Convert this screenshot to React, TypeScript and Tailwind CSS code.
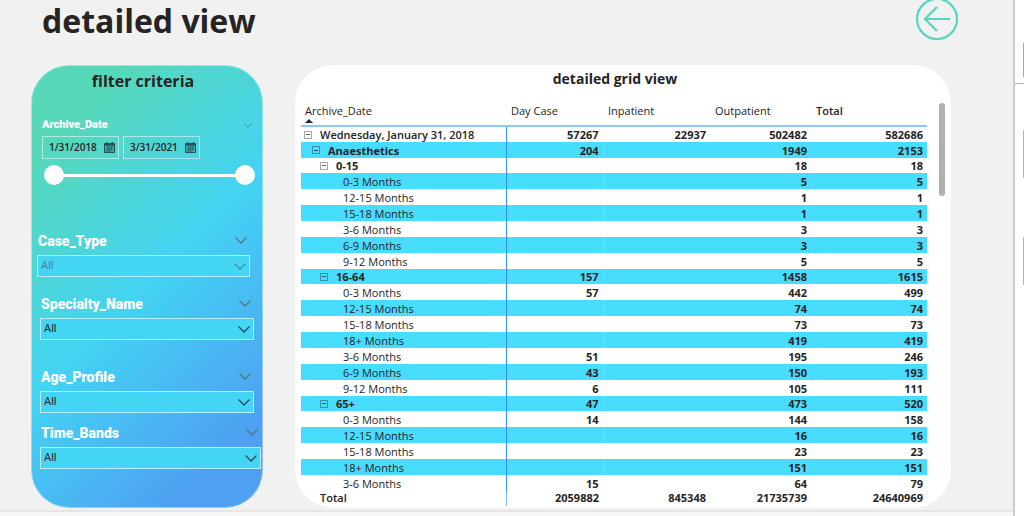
import { useState } from "react";
import { clsx } from "clsx";

type Row = {
  label: string;
  level: 0 | 1 | 2 | 3;
  values: [string, string, string, string];
};

const rows: Row[] = [
  { label: "Wednesday, January 31, 2018", level: 0, values: ["57267", "22937", "502482", "582686"] },
  { label: "Anaesthetics", level: 1, values: ["204", "", "1949", "2153"] },
  { label: "0-15", level: 2, values: ["", "", "18", "18"] },
  { label: "0-3 Months", level: 3, values: ["", "", "5", "5"] },
  { label: "12-15 Months", level: 3, values: ["", "", "1", "1"] },
  { label: "15-18 Months", level: 3, values: ["", "", "1", "1"] },
  { label: "3-6 Months", level: 3, values: ["", "", "3", "3"] },
  { label: "6-9 Months", level: 3, values: ["", "", "3", "3"] },
  { label: "9-12 Months", level: 3, values: ["", "", "5", "5"] },
  { label: "16-64", level: 2, values: ["157", "", "1458", "1615"] },
  { label: "0-3 Months", level: 3, values: ["57", "", "442", "499"] },
  { label: "12-15 Months", level: 3, values: ["", "", "74", "74"] },
  { label: "15-18 Months", level: 3, values: ["", "", "73", "73"] },
  { label: "18+ Months", level: 3, values: ["", "", "419", "419"] },
  { label: "3-6 Months", level: 3, values: ["51", "", "195", "246"] },
  { label: "6-9 Months", level: 3, values: ["43", "", "150", "193"] },
  { label: "9-12 Months", level: 3, values: ["6", "", "105", "111"] },
  { label: "65+", level: 2, values: ["47", "", "473", "520"] },
  { label: "0-3 Months", level: 3, values: ["14", "", "144", "158"] },
  { label: "12-15 Months", level: 3, values: ["", "", "16", "16"] },
  { label: "15-18 Months", level: 3, values: ["", "", "23", "23"] },
  { label: "18+ Months", level: 3, values: ["", "", "151", "151"] },
  { label: "3-6 Months", level: 3, values: ["15", "", "64", "79"] },
];

const totals = ["2059882", "845348", "21735739", "24640969"];

const indent = ["pl-[3px]", "pl-[11px]", "pl-[19px]", "pl-[42px]"];

function Chevron({ className }: { className?: string }) {
  return (
    <svg
      viewBox="0 0 12 7"
      fill="none"
      stroke="currentColor"
      strokeWidth="1.3"
      className={clsx("h-[7px]", className)}
    >
      <path d="M0.5 0.5 L6 6 L11.5 0.5" />
    </svg>
  );
}

function CalendarIcon() {
  return (
    <svg viewBox="0 0 11 11" className="w-[11px] h-[11px] shrink-0 text-[#24505a]">
      <path d="M0.5 1.5h10v9h-10z" fill="none" stroke="currentColor" />
      <path d="M1 1.5h9v2.2H1zM2 0h1.4v2H2zM7.6 0H9v2H7.6z" fill="currentColor" />
      <path d="M1 4h9v6H1z" fill="currentColor" fillOpacity="0.35" />
      <path d="M3 5h6M2 7h7M2 9h5M3.5 4.5v5M5.5 4.5v5M7.5 4.5v4" stroke="currentColor" strokeWidth="0.6" />
    </svg>
  );
}

function DateBox({ label, value }: { label: string; value: string }) {
  return (
    <div className="flex items-center w-[77px] h-[23px] border border-white/50 pl-1.5 pr-[3px]">
      <input
        type="text"
        aria-label={label}
        defaultValue={value}
        className="min-w-0 flex-1 bg-transparent text-[10px] font-semibold text-[#252423] outline-none"
      />
      <CalendarIcon />
    </div>
  );
}

const rangeClass =
  "col-start-1 row-start-1 w-full h-5 appearance-none bg-transparent pointer-events-none " +
  "[&::-webkit-slider-thumb]:appearance-none [&::-webkit-slider-thumb]:w-5 [&::-webkit-slider-thumb]:h-5 " +
  "[&::-webkit-slider-thumb]:rounded-full [&::-webkit-slider-thumb]:bg-white [&::-webkit-slider-thumb]:pointer-events-auto";

function DateRange() {
  const [from, setFrom] = useState(0);
  const [to, setTo] = useState(38);
  return (
    <div className="grid items-center mt-1.5 ml-0.5 mr-[7px]">
      <div className="col-start-1 row-start-1 h-[3px] mx-2 bg-white" />
      <input
        type="range"
        aria-label="Start month"
        min={0}
        max={38}
        value={from}
        onChange={(e) => setFrom(Math.min(Number(e.target.value), to))}
        className={rangeClass}
      />
      <input
        type="range"
        aria-label="End month"
        min={0}
        max={38}
        value={to}
        onChange={(e) => setTo(Math.max(Number(e.target.value), from))}
        className={rangeClass}
      />
    </div>
  );
}

type SlicerProps = { id: string; label: string; className: string; muted?: boolean };

function Slicer({ id, label, className, muted }: SlicerProps) {
  return (
    <div className={className}>
      <div className="flex items-start justify-between pl-px pr-[3px] h-[22px]">
        <label htmlFor={id} className="font-[Roboto,sans-serif] text-[14px] leading-4 font-black text-white">
          {label}
        </label>
        <button type="button" aria-label={`Clear ${label}`} className="mt-1 text-[#4c7a78]">
          <Chevron className="w-3" />
        </button>
      </div>
      <div className="grid items-center">
        <select
          id={id}
          className={clsx(
            "col-start-1 row-start-1 w-full h-[22px] appearance-none rounded-none border border-white/60 bg-[#45d5f4] pl-[3px] font-[Roboto,sans-serif] text-[11px] outline-none",
            muted ? "text-[#4f7f8b]" : "text-[#252423]",
          )}
        >
          <option>All</option>
        </select>
        <Chevron
          className={clsx(
            "col-start-1 row-start-1 w-3 justify-self-end mr-1 pointer-events-none",
            muted ? "text-[#3f8fa3]" : "text-[#1f4a55]",
          )}
        />
      </div>
    </div>
  );
}

function FilterPanel() {
  return (
    <aside className="w-[232px] shrink-0 h-[443px] rounded-[38px] border border-white/40 bg-linear-[135deg,#57d8b9_14%,#43d3f3_50%,#4f9ff2_87%] bg-origin-border">
      <h2 className="mt-[3px] mr-2 text-center text-[16px] leading-6 font-bold text-[#252423]">filter criteria</h2>

      <div className="mt-6 ml-2.5">
        <div className="flex items-center justify-between h-4 pr-2.5">
          <span className="font-[Roboto,sans-serif] text-[11px] leading-4 font-black text-white">Archive_Date</span>
          <button type="button" aria-label="Clear Archive_Date" className="text-[#3f8f8c]">
            <Chevron className="w-2" />
          </button>
        </div>
        <div className="flex gap-1 mt-[3px]">
          <DateBox label="Start date" value="1/31/2018" />
          <DateBox label="End date" value="3/31/2021" />
        </div>
        <DateRange />
      </div>

      <Slicer id="case-type" label="Case_Type" muted className="mt-12 ml-[5px] mr-3" />
      <Slicer id="specialty" label="Specialty_Name" className="mt-[19px] ml-2 mr-2" />
      <Slicer id="age-profile" label="Age_Profile" className="mt-[29px] ml-2 mr-2" />
      <Slicer id="time-bands" label="Time_Bands" className="mt-3 ml-2 mr-px" />
    </aside>
  );
}

function Toggle({ label }: { label: string }) {
  return (
    <button
      type="button"
      aria-label={`Collapse ${label}`}
      className="flex items-center justify-center w-2 h-2 mr-2 shrink-0 border border-[#252423]/40"
    >
      <span className="w-1 h-px bg-[#252423]/70" />
    </button>
  );
}

function GridTable() {
  return (
    <table className="w-full table-fixed border-collapse text-[11px] text-[#252423]">
      <colgroup>
        <col />
        <col className="w-[97px]" />
        <col className="w-[107px]" />
        <col className="w-[101px]" />
        <col className="w-[116px]" />
      </colgroup>
      <thead>
        <tr className="h-[23px] border-b-2 border-[#8fc6f5] text-left align-top leading-4">
          <th className="pl-1 font-normal">
            Archive_Date
            <span className="block w-0 h-0 border-x-4 border-x-transparent border-b-4 border-b-[#252423]" />
          </th>
          <th className="pl-[5px] font-normal">Day Case</th>
          <th className="pl-[5px] font-normal">Inpatient</th>
          <th className="pl-[5px] font-normal">Outpatient</th>
          <th className="pl-[5px] font-semibold">Total</th>
        </tr>
      </thead>
      <tbody>
        {rows.map((row, i) => (
          <tr
            key={i}
            className={clsx(
              "leading-[15px]",
              row.level === 2 ? "h-[15px]" : "h-4",
              i % 2 === 1 && "bg-[#48dcff]",
            )}
          >
            <th
              className={clsx(
                "p-0 text-left border-r border-[#2f97f0] whitespace-nowrap",
                row.level === 3 ? "font-normal" : row.level === 0 ? "font-semibold" : "font-bold",
              )}
            >
              <span className={clsx("flex items-center", indent[row.level])}>
                {row.level < 3 && <Toggle label={row.label} />}
                {row.label}
              </span>
            </th>
            {row.values.map((v, j) => (
              <td key={j} className={clsx("p-0 pr-1 text-right font-bold", j === 0 && "border-r border-r-white/20")}>
                {v}
              </td>
            ))}
          </tr>
        ))}
      </tbody>
      <tfoot>
        <tr className="h-[15px] leading-[14px] align-top">
          <th className="p-0 pl-[19px] text-left font-semibold border-r border-[#7cc0f6]">Total</th>
          {totals.map((v) => (
            <td key={v} className="p-0 pr-1 text-right font-bold">
              {v}
            </td>
          ))}
        </tr>
      </tfoot>
    </table>
  );
}

function SidePane() {
  return (
    <div className="w-[11px] shrink-0 border-l-2 border-[#cdcdcd] bg-white">
      <div className="h-[84px] border-b border-[#b5b5b5] pt-[43px]">
        <div className="ml-auto w-px h-[34px] bg-[#a8a8a8]" />
      </div>
      <div className="ml-auto mt-[46px] w-px h-12 bg-[#b8b8b8]" />
      <div className="ml-auto mt-[59px] w-px h-12 bg-[#b8b8b8]" />
    </div>
  );
}

export default function App() {
  return (
    <div className="flex min-h-screen overflow-hidden bg-[#f8f8f8] font-['Open_Sans','Noto_Sans',sans-serif]">
      <div className="flex-1 min-w-0">
        <main className="pb-0.5 bg-[#f1f1f1] border-b-2 border-[#e6e6e6]">
          <header className="flex justify-between h-[65px] pl-[42px] pr-[54px]">
            <h1 className="text-[32px] leading-[42px] font-bold text-[#252423]">detailed view</h1>
            <button type="button" aria-label="Back" className="self-start">
              <svg viewBox="0 0 44 40" fill="none" stroke="#55d6be" strokeWidth="2.2" className="w-11 h-10">
                <circle cx="22" cy="19" r="20" />
                <path d="M35 19H9.500M22 7L10 19L22 31" />
              </svg>
            </button>
          </header>

          <div className="flex gap-8 pl-[31px] pr-[62px]">
            <FilterPanel />
            <section className="flex-1 min-w-0 h-[443px] rounded-[38px] bg-white">
              <h2 className="h-[38px] pt-0.5 mr-4 text-center text-[14px] leading-6 font-bold text-[#252423]">
                detailed grid view
              </h2>
              <div className="flex gap-3 pl-1.5 pr-1.5">
                <div className="flex-1 min-w-0">
                  <GridTable />
                </div>
                <div className="w-1.5 h-[93px] rounded-full bg-[#b0b0b0]" />
              </div>
            </section>
          </div>
        </main>
      </div>
      <SidePane />
    </div>
  );
}
